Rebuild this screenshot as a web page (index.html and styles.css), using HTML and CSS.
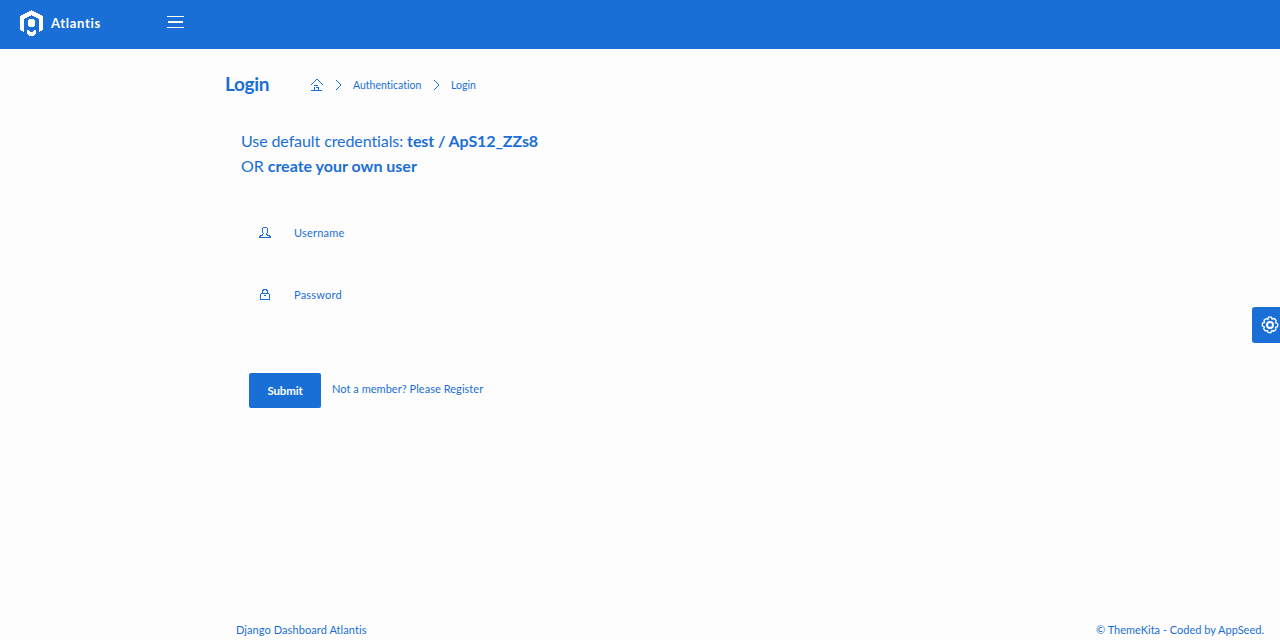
FILE: index.html
```html
<!DOCTYPE html>
<html lang="en">
<head>
<meta charset="utf-8">
<title>Login - Atlantis</title>
<link rel="stylesheet" href="styles.css">
</head>
<body>
<header class="topbar">
  <a class="brand">
    <svg class="logo" width="24" height="27" viewBox="0 0 24 27" shape-rendering="crispEdges"><path fill="#fff" d="M11.5 0 23 6V20L19 22V9L11.5 5 4 9V22L0 20V6Z"/><circle cx="11.5" cy="13" r="4" fill="#fff"/><path fill="#fff" d="M7 20H9L10 22H13L14 20H15.5V24L13 26H10L7 24Z"/></svg>
    <span class="brand-name">Atlantis</span>
  </a>
  <span class="menu"><i class="wide"></i><i class="short"></i><i class="wide"></i></span>
</header>
<main class="main">
  <div class="page-header">
    <h1 class="title">Login</h1>
    <nav class="crumbs">
      <svg class="home" width="14" height="14" viewBox="0 0 14 14" shape-rendering="crispEdges"><path class="line" d="M1 7 7 1 13 7M1 12.5H12M4.5 7V8M4.5 9V12M8.5 9V12M5 7.5H8M6 9.5H8"/></svg>
      <svg class="chev" width="7" height="12" viewBox="0 0 7 12" shape-rendering="crispEdges"><path class="line" d="M1 1 6 6 1 11"/></svg>
      <span class="crumb-auth">Authentication</span>
      <svg class="chev" width="7" height="12" viewBox="0 0 7 12" shape-rendering="crispEdges"><path class="line" d="M1 1 6 6 1 11"/></svg>
      <span class="crumb-login">Login</span>
    </nav>
  </div>
  <p class="hint">Use default credentials: <b>test / ApS12_ZZs8</b><br>OR <b class="own">create your own user</b></p>
  <form class="form">
    <div class="field">
      <svg width="12" height="12" viewBox="0 0 12 12" shape-rendering="crispEdges"><path class="line" d="M4.5 7.5 3.5 5V2L4.5 .5H7.5L8.5 2V5L7.5 7.5 11.5 9.5V10.5M4.5 7.5 .5 9.5V10.5M1 10.5H11"/></svg>
      <span>Username</span>
    </div>
    <div class="field">
      <svg width="12" height="12" viewBox="0 0 12 12" shape-rendering="crispEdges"><path class="line" d="M3.5 5V2.5L4.5 .5H7.5L8.5 2.5V5M2.5 4.5H9.5L10.5 6V10.5H1.5V6ZM5 6.5H7"/></svg>
      <span>Password</span>
    </div>
    <div class="actions">
      <button class="submit" type="button">Submit</button>
      <a class="register">Not a member? Please Register</a>
    </div>
  </form>
</main>
<footer class="footer"><span class="foot-left">Django Dashboard Atlantis</span><span class="foot-right">© ThemeKita - Coded by AppSeed.</span></footer>
<div class="settings">
  <svg width="18" height="18" viewBox="0 0 18 18" fill="none" stroke="#fff"><circle cx="9" cy="9" r="3" stroke-width="2"/><path stroke-width="1.3" d="M7.5 1.2 10.5 1.2 11 3 13.5 2.5 15.2 4.7 14.5 6.5 16.8 8 16.5 10.8 14.6 11.3 14.8 13.8 12.5 15.4 11 14.5 9.8 16.7 7 16.4 6.6 14.6 4.2 14.9 2.6 12.6 3.4 11 1.3 9.8 1.5 7 3.4 6.6 3 4.2 5.3 2.5 6.9 3.4Z"/></svg>
</div>
</body>
</html>
```
FILE: styles.css
```css
* { box-sizing: border-box; }
body {
  margin: 0;
  height: 640px;
  overflow: hidden;
  display: flex;
  flex-direction: column;
  background: #fdfdfd;
  color: #1a6fd6;
  font: 11px/16px Lato, sans-serif;
  font-variant-ligatures: none;
}
.topbar {
  height: 49px;
  flex: none;
  display: flex;
  background: #1a6fd6;
  color: #fff;
}
.brand { display: flex; width: 167px; padding: 10px 0 0 20px; }
.brand-name { margin: 5px 0 0 7px; font-size: 13px; font-weight: 700; letter-spacing: .7px; }
.menu { display: flex; flex-direction: column; align-items: center; gap: 4px; width: 17px; padding-top: 16px; }
.menu i { background: #fff; height: 1px; width: 17px; }
.menu .short { height: 2px; width: 15px; }
.line { fill: none; stroke: #1a6fd6; }
.main { flex: 1; padding: 23px 0 0 225px; }
.page-header { display: flex; height: 24px; align-items: center; }
.title { margin: 0; width: 85px; font-size: 19px; line-height: 24px; font-weight: 700; letter-spacing: -.35px; }
.crumbs { display: flex; align-items: center; height: 24px; font-size: 10.5px; padding-top: 1px; }
.home { margin-right: 11px; }
.crumb-auth { width: 69px; margin: 0 11px; white-space: nowrap; }
.crumb-login { margin-left: 11px; }
.hint { margin: 32px 0 0 16px; font-size: 16px; line-height: 25px; letter-spacing: -.09px; }
.own { letter-spacing: 0; }
.form { margin: 0 0 0 24px; padding-top: 24px; }
.field { display: flex; align-items: center; height: 62px; padding-left: 10px; gap: 23px; letter-spacing: .2px; }
.actions { display: flex; align-items: flex-start; margin-top: 47px; }
.submit {
  width: 72px;
  height: 35px;
  padding: 0;
  border: 0;
  border-radius: 2px;
  background: #1a6fd6;
  color: #fff;
  font: 700 11.5px/35px Lato, sans-serif;
  letter-spacing: -.15px;
}
.register { margin: 8px 0 0 11px; letter-spacing: .04px; }
.footer { display: flex; justify-content: space-between; height: 18px; padding: 0 16px 0 236px; }
.foot-left { letter-spacing: .08px; }
.settings {
  position: absolute;
  right: 0;
  top: 307px;
  width: 28px;
  height: 36px;
  padding: 9px 0 0 9px;
  overflow: hidden;
  border-radius: 3px 0 0 3px;
  background: #1a6fd6;
}
```
